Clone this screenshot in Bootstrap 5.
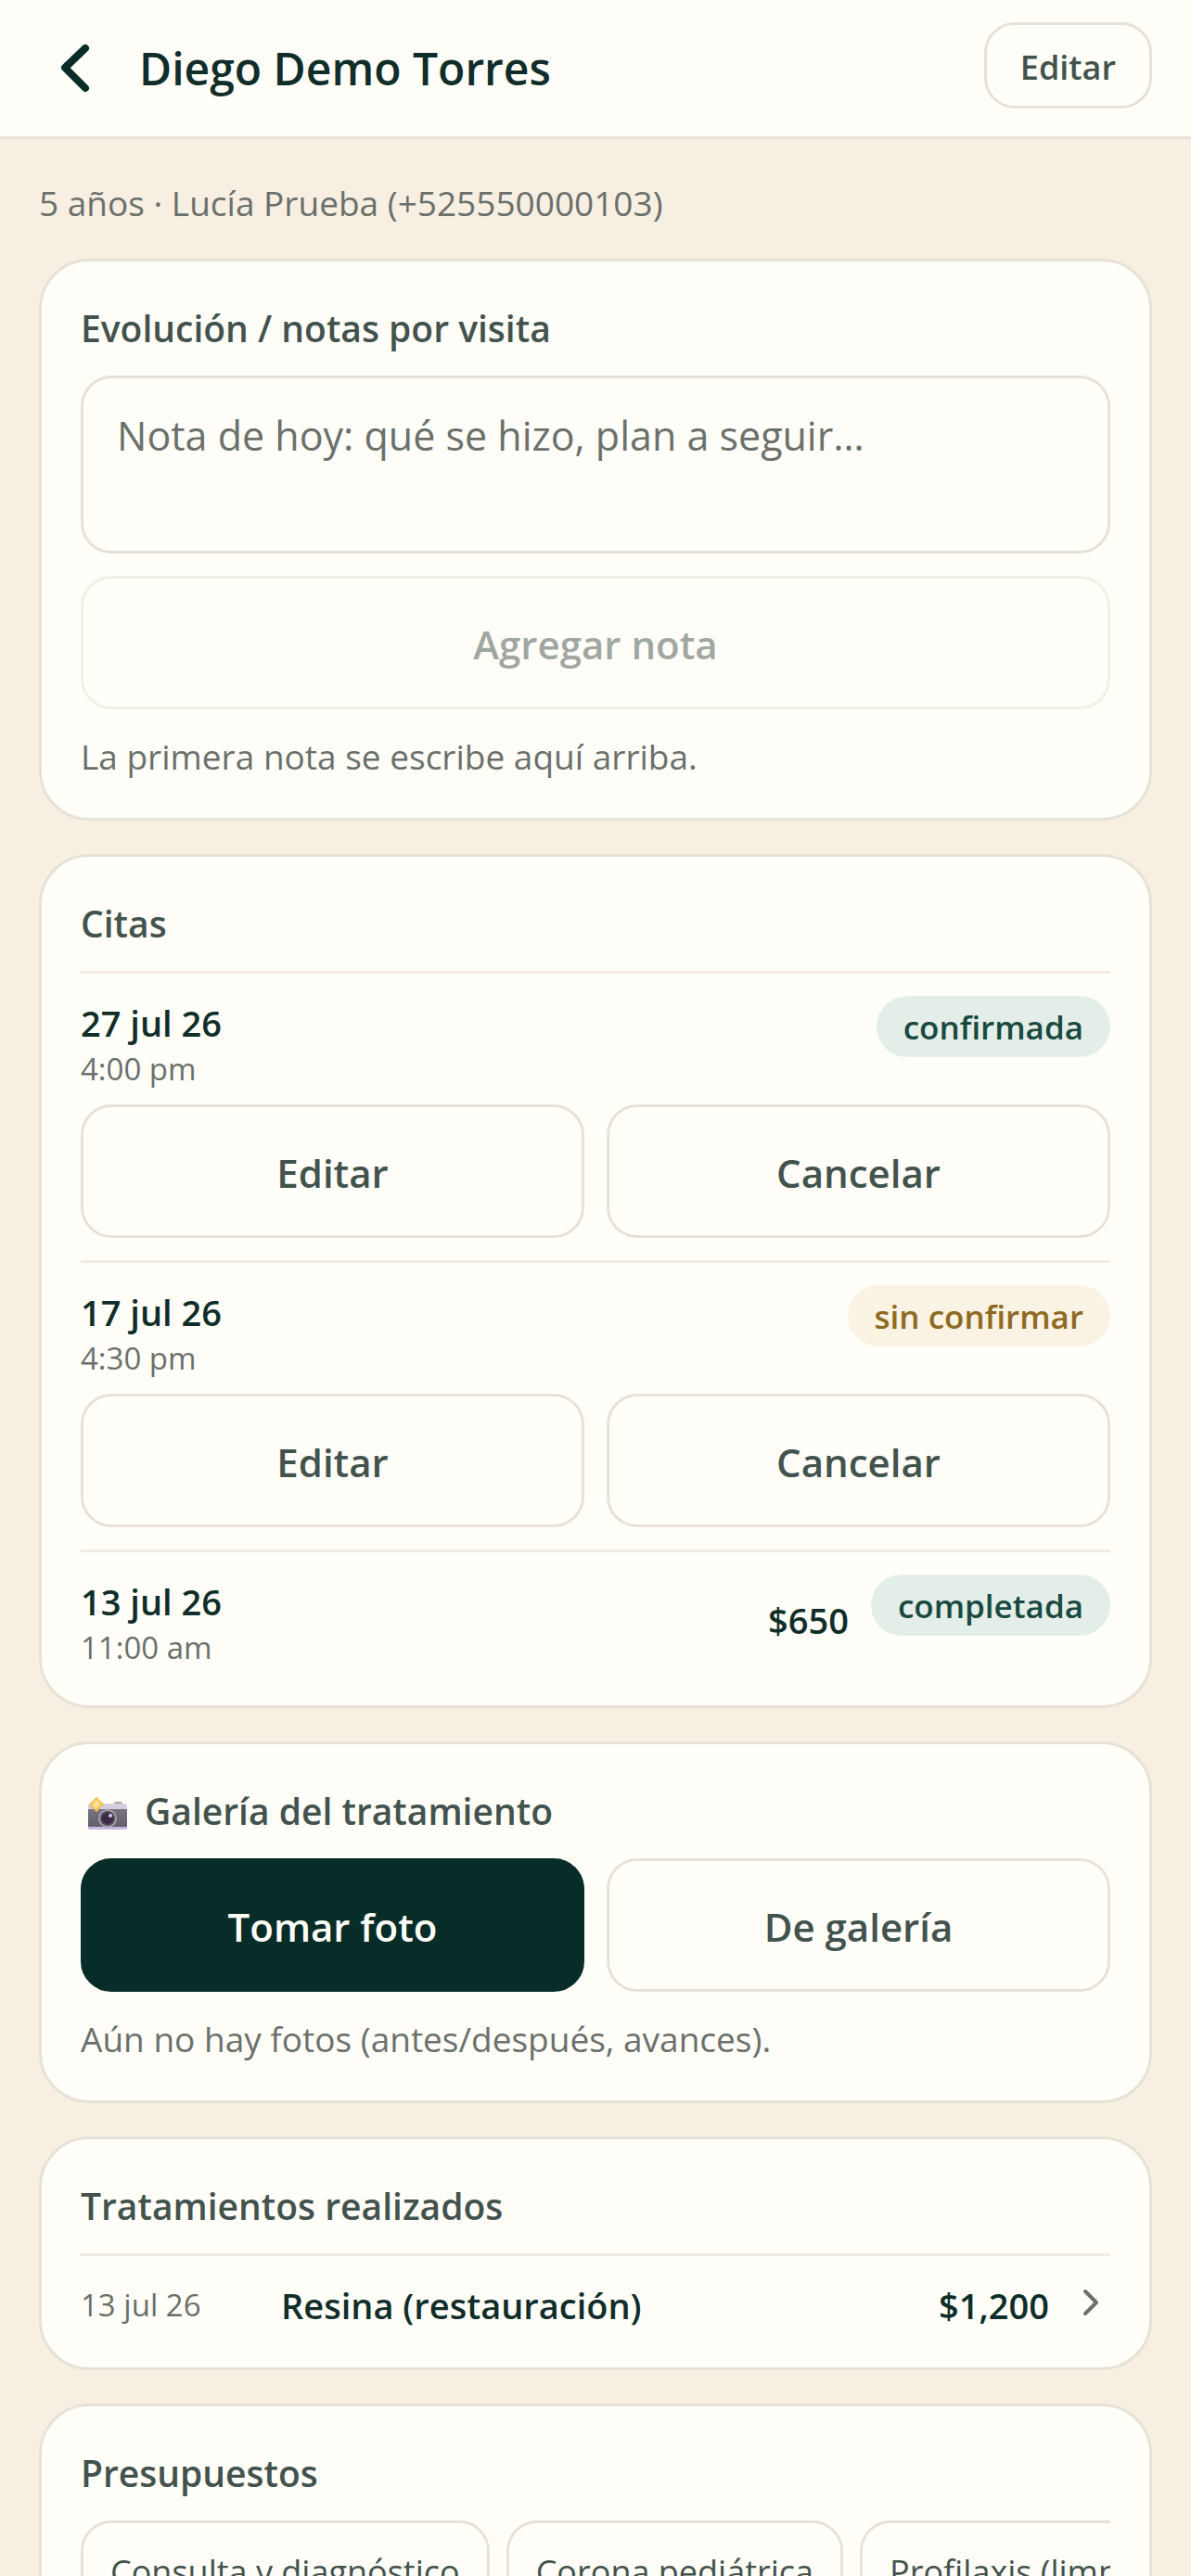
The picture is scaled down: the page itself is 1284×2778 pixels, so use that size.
<!DOCTYPE html>
<html lang="es">
<head>
<meta charset="utf-8">
<meta name="viewport" content="width=device-width, initial-scale=1">
<title>Diego Demo Torres</title>
<link href="https://cdn.jsdelivr.net/npm/bootstrap@5.3.0/dist/css/bootstrap.min.css" rel="stylesheet">
<style>
:root{--ink:#102d29;--deep:#082d29;--soft:#43524d;--muted:#6b706b;--paper:#fffef8;--sand:#f8efe3;--edge:#e7e2d8;--hair:#f0ebe3}
body{font-family:"Open Sans","Noto Sans",sans-serif;background:var(--sand);color:var(--ink);font-size:38px;line-height:57px}
.app{height:100vh;overflow:hidden}
.topbar{background:var(--paper);border-bottom:3px solid var(--edge);padding:24px 42px}
.topbar-row{height:99px;gap:24px}
.back{width:84px;color:var(--deep)}
.who{font-size:48px;line-height:66px;font-weight:600;color:var(--ink)}
.btn{--bs-btn-border-width:3px;--bs-btn-border-radius:33px;--bs-btn-font-weight:600;--bs-btn-font-size:42px;--bs-btn-line-height:60px;--bs-btn-padding-y:0px;height:144px;padding-top:3px}
.btn-soft{--bs-btn-color:var(--soft);--bs-btn-bg:var(--paper);--bs-btn-border-color:var(--edge);--bs-btn-hover-border-color:var(--edge);--bs-btn-hover-bg:var(--sand);--bs-btn-disabled-color:var(--soft);--bs-btn-disabled-border-color:var(--edge);--bs-btn-disabled-bg:var(--paper);--bs-btn-disabled-opacity:.5}
.btn-deep{--bs-btn-color:var(--paper);--bs-btn-bg:var(--deep);--bs-btn-border-color:var(--deep);--bs-btn-hover-color:var(--paper);--bs-btn-hover-bg:var(--ink)}
.btn-head{--bs-btn-font-size:36px;--bs-btn-padding-x:36px;height:93px;padding-top:4px}
.content{padding:45px 42px;gap:36px}
.note-text{font-size:37px;line-height:48px;color:var(--muted)}
.after{margin-top:27px}
.panel{background:var(--paper);border:3px solid var(--edge);border-radius:54px;padding:42px}
.panel-title{font-size:39px;line-height:60px;font-weight:600;color:var(--soft);margin-bottom:21px}
.form-control.entry{height:192px;resize:none;font-size:43px;line-height:57px;padding:33px 36px;border:3px solid var(--edge);border-radius:33px;background:var(--paper);margin-bottom:24px}
.entry::placeholder{color:var(--muted)}
.visit{border-top:3px solid var(--hair);padding:24px 0}
.visit:last-child{padding-bottom:0}
.strong{font-weight:600}
.visit .strong{line-height:59px}
.small-text{font-size:33px;line-height:40px;color:var(--muted)}
.pair{gap:24px}
.actions{margin-top:18px}
.status{font-size:35px;line-height:64px;font-weight:600;border-radius:33px;padding:2px 29px 0;background:#e4eee9;color:#184a40}
.status-wait{background:#faf2e2;color:#8f6a22}
.done{border-top:3px solid var(--hair);padding-top:24px;line-height:50px;color:inherit}
.done-date{width:216px}
.done-chevron{width:42px;margin-left:24px}
.camera{width:51px;height:48px;margin-right:18px}
.chips{gap:18px}
.chip{--bs-btn-font-weight:400;--bs-btn-font-size:36px;--bs-btn-padding-x:29px;height:108px}
</style>
<script src="https://cdn.jsdelivr.net/npm/bootstrap@5.3.0/dist/js/bootstrap.bundle.min.js" defer></script>
</head>
<body>
<div class="app d-flex flex-column">
  <header class="topbar flex-shrink-0">
    <div class="topbar-row d-flex align-items-center">
      <a href="#" class="back d-flex justify-content-center" aria-label="Volver">
        <svg width="72" height="72" viewBox="0 0 72 72" fill="none" stroke="currentColor" stroke-width="8" stroke-linecap="round" stroke-linejoin="round"><path d="M44 14 22 35l22 22"/></svg>
      </a>
      <h1 class="who flex-grow-1 text-truncate mb-0">Diego Demo Torres</h1>
      <button type="button" class="btn btn-soft btn-head align-self-start">Editar</button>
    </div>
  </header>
  <main class="content d-flex flex-column">
    <p class="note-text mb-0">5 años · Lucía Prueba (+525550000103)</p>

    <section class="panel">
      <h2 class="panel-title"><label for="nota">Evolución / notas por visita</label></h2>
      <textarea id="nota" class="form-control entry" placeholder="Nota de hoy: qué se hizo, plan a seguir…"></textarea>
      <button type="button" class="btn btn-soft w-100" disabled>Agregar nota</button>
      <p class="note-text after mb-0">La primera nota se escribe aquí arriba.</p>
    </section>

    <section class="panel">
      <h2 class="panel-title">Citas</h2>
      <article class="visit">
        <div class="d-flex align-items-center pair">
          <div class="flex-grow-1"><div class="strong">27 jul 26</div><div class="small-text">4:00 pm</div></div>
          <span class="status align-self-start">confirmada</span>
        </div>
        <div class="d-flex pair actions">
          <button type="button" class="btn btn-soft w-50">Editar</button>
          <button type="button" class="btn btn-soft w-50">Cancelar</button>
        </div>
      </article>
      <article class="visit">
        <div class="d-flex align-items-center pair">
          <div class="flex-grow-1"><div class="strong">17 jul 26</div><div class="small-text">4:30 pm</div></div>
          <span class="status status-wait align-self-start">sin confirmar</span>
        </div>
        <div class="d-flex pair actions">
          <button type="button" class="btn btn-soft w-50">Editar</button>
          <button type="button" class="btn btn-soft w-50">Cancelar</button>
        </div>
      </article>
      <article class="visit">
        <div class="d-flex align-items-center pair">
          <div class="flex-grow-1"><div class="strong">13 jul 26</div><div class="small-text">11:00 am</div></div>
          <span class="strong">$650</span>
          <span class="status align-self-start">completada</span>
        </div>
      </article>
    </section>

    <section class="panel">
      <h2 class="panel-title d-flex align-items-center">
        <svg class="camera" viewBox="0 0 51 48" aria-hidden="true">
          <defs>
            <linearGradient id="body" x2="0" y2="1"><stop stop-color="#79747f"/><stop offset="1" stop-color="#625e69"/></linearGradient>
            <linearGradient id="spark" x2="1" y2="1"><stop stop-color="#f5c33b"/><stop offset=".5" stop-color="#fbe6a8"/><stop offset="1" stop-color="#eeb52f"/></linearGradient>
          </defs>
          <rect x="36" y="14" width="9" height="5" rx="2" fill="#a9a6a5"/>
          <rect x="8" y="16" width="42" height="28" rx="3" fill="#d5cde4"/>
          <rect x="8" y="22" width="42" height="19" fill="url(#body)"/>
          <path d="M8 41h42v1a2 2 0 0 1-2 2H10a2 2 0 0 1-2-2z" fill="#c8b6e3"/>
          <circle cx="29" cy="32" r="10" fill="#a5a0ad"/>
          <circle cx="29" cy="32" r="8" fill="#514a5c"/>
          <circle cx="29" cy="32" r="6" fill="#3a2a48"/>
          <circle cx="32" cy="29" r="2" fill="#d5cde4"/>
          <path d="M17 10c2 3 4 5 7 7-3 2-5 4-7 7-2-3-4-5-7-7 3-2 5-4 7-7z" fill="url(#spark)" stroke="#f0c04a" stroke-width="2" stroke-linejoin="round"/>
        </svg>
        Galería del tratamiento
      </h2>
      <div class="d-flex pair">
        <button type="button" class="btn btn-deep w-50">Tomar foto</button>
        <button type="button" class="btn btn-soft w-50">De galería</button>
      </div>
      <p class="note-text after mb-0">Aún no hay fotos (antes/después, avances).</p>
    </section>

    <section class="panel">
      <h2 class="panel-title">Tratamientos realizados</h2>
      <a href="#" class="done d-flex align-items-center text-decoration-none">
        <span class="done-date small-text flex-shrink-0 pt-1">13 jul 26</span>
        <span class="strong flex-grow-1 pt-1">Resina (restauración)</span>
        <span class="strong pt-1">$1,200</span>
        <svg class="done-chevron" viewBox="0 0 42 42" fill="none" stroke="#6b706b" stroke-width="4" stroke-linecap="round" stroke-linejoin="round" aria-hidden="true"><path d="m15 8 12 12-12 12"/></svg>
      </a>
    </section>

    <section class="panel">
      <h2 class="panel-title">Presupuestos</h2>
      <div class="chips d-flex overflow-hidden">
        <button type="button" class="btn btn-soft chip text-nowrap flex-shrink-0">Consulta y diagnóstico</button>
        <button type="button" class="btn btn-soft chip text-nowrap flex-shrink-0">Corona pediátrica</button>
        <button type="button" class="btn btn-soft chip text-nowrap flex-shrink-0">Profilaxis (limpieza)</button>
      </div>
    </section>
  </main>
</div>
</body>
</html>
